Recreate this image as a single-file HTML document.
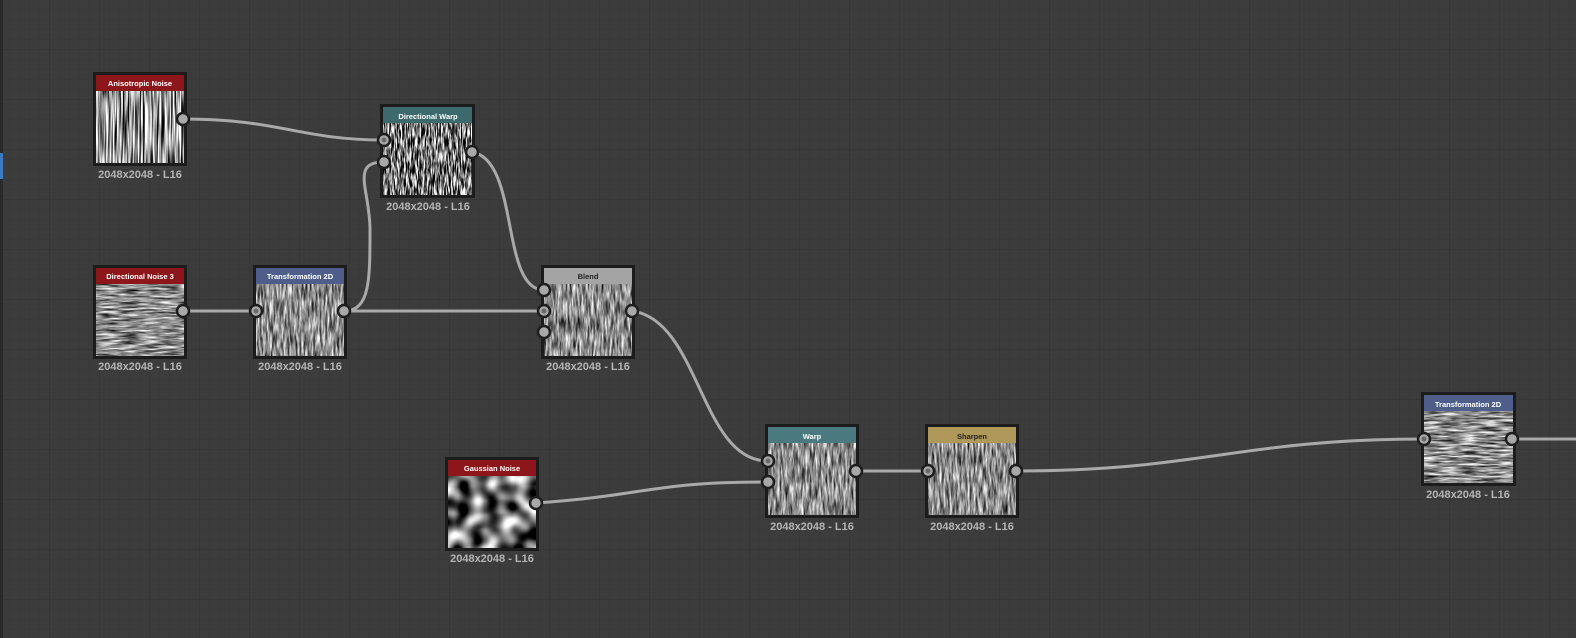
<!DOCTYPE html>
<html><head><meta charset="utf-8"><style>
html,body{margin:0;padding:0;background:#3c3c3c;overflow:hidden}
svg{display:block}
text{font-family:"Liberation Sans",sans-serif}
.h{font-size:7.5px;font-weight:bold;fill:#fff;text-anchor:middle}
.l{font-size:11px;font-weight:bold;fill:#b4b4b4;text-anchor:middle}
.w{fill:none;stroke:#a9a9a9;stroke-width:3}
.p{fill:#a8a8a8;stroke:#1e1e1e;stroke-width:2.5}
.d{fill:#6a6a6a}
filter{color-interpolation-filters:sRGB}
</style></head><body>
<svg width="1576" height="638" viewBox="0 0 1576 638" xmlns="http://www.w3.org/2000/svg">
<defs>
<pattern id="g1" width="10" height="10" patternUnits="userSpaceOnUse"><path d="M10 0V10H0" fill="none" stroke="#373737" stroke-width="1"/></pattern>
<pattern id="g2" width="50" height="50" patternUnits="userSpaceOnUse"><path d="M50 0V50H0" fill="none" stroke="#323232" stroke-width="1"/></pattern>
<filter id="fv" x="0" y="0" width="1" height="1" color-interpolation-filters="sRGB"><feTurbulence type="fractalNoise" baseFrequency="0.6 0.02" numOctaves="2" seed="3"/><feColorMatrix values="3 0 0 0 -0.9  3 0 0 0 -0.9  3 0 0 0 -0.9  0 0 0 0 1"/></filter>
<filter id="fw" x="0" y="0" width="1" height="1" color-interpolation-filters="sRGB"><feTurbulence type="fractalNoise" baseFrequency="0.7 0.08" numOctaves="3" seed="5"/><feColorMatrix values="3.2 0 0 0 -1.15  3.2 0 0 0 -1.15  3.2 0 0 0 -1.15  0 0 0 0 1"/></filter>
<filter id="fg" x="0" y="0" width="1" height="1" color-interpolation-filters="sRGB"><feTurbulence type="fractalNoise" baseFrequency="0.5 0.06" numOctaves="3" seed="7"/><feColorMatrix values="1.5 0 0 0 -0.2  1.5 0 0 0 -0.2  1.5 0 0 0 -0.2  0 0 0 0 1"/></filter>
<filter id="fh" x="0" y="0" width="1" height="1" color-interpolation-filters="sRGB"><feTurbulence type="fractalNoise" baseFrequency="0.05 0.5" numOctaves="3" seed="9"/><feColorMatrix values="1.5 0 0 0 -0.2  1.5 0 0 0 -0.2  1.5 0 0 0 -0.2  0 0 0 0 1"/></filter>
<filter id="fb" x="0" y="0" width="1" height="1" color-interpolation-filters="sRGB"><feTurbulence type="fractalNoise" baseFrequency="0.07" numOctaves="1" seed="2"/><feColorMatrix values="2.6 0 0 0 -0.85  2.6 0 0 0 -0.85  2.6 0 0 0 -0.85  0 0 0 0 1"/></filter>
</defs>
<rect width="1576" height="638" fill="#3c3c3c"/>
<rect width="1576" height="638" fill="url(#g1)"/>
<rect width="1576" height="638" fill="url(#g2)"/>
<rect x="0" y="0" width="3" height="638" fill="#2a2a2a"/>
<rect x="0" y="153" width="3" height="26" fill="#3a7ac0"/>

<path class="w" d="M183 119 C280 119 300 140 384 140"/>
<path class="w" d="M384 162 C350 162 370 190 370 230 C370 280 370 311 344 311"/>
<path class="w" d="M472 152 C520 160 500 290 544 290"/>
<path class="w" d="M183 311 H256"/>
<path class="w" d="M344 311 H544"/>
<path class="w" d="M632 311 C700 320 700 461 768 461"/>
<path class="w" d="M536 503 C650 495 650 482 768 482"/>
<path class="w" d="M856 471 H928"/>
<path class="w" d="M1016 471 C1200 471 1240 439 1424 439"/>
<path class="w" d="M1512 439 H1576"/>

<g>
<rect x="93" y="72" width="94" height="94" fill="#1c1c1c"/>
<rect x="96" y="90" width="88" height="73" filter="url(#fv)"/>
<rect x="96" y="75" width="88" height="16" fill="#8c161a"/>
<text class="h" x="140" y="86">Anisotropic Noise</text>
<text class="l" x="140" y="178">2048x2048 - L16</text>
</g>
<g>
<rect x="380" y="104" width="95" height="94" fill="#1c1c1c"/>
<rect x="383" y="122" width="89" height="73" filter="url(#fw)"/>
<rect x="383" y="107" width="89" height="16" fill="#3c6a6c"/>
<text class="h" x="428" y="119">Directional Warp</text>
<text class="l" x="428" y="210">2048x2048 - L16</text>
</g>
<g>
<rect x="93" y="265" width="94" height="94" fill="#1c1c1c"/>
<rect x="96" y="283" width="88" height="73" filter="url(#fh)"/>
<rect x="96" y="268" width="88" height="16" fill="#8c161a"/>
<text class="h" x="140" y="279">Directional Noise 3</text>
<text class="l" x="140" y="370">2048x2048 - L16</text>
</g>
<g>
<rect x="253" y="265" width="94" height="94" fill="#1c1c1c"/>
<rect x="256" y="283" width="88" height="73" filter="url(#fg)"/>
<rect x="256" y="268" width="88" height="16" fill="#4f5d8a"/>
<text class="h" x="300" y="279">Transformation 2D</text>
<text class="l" x="300" y="370">2048x2048 - L16</text>
</g>
<g>
<rect x="541" y="265" width="94" height="94" fill="#1c1c1c"/>
<rect x="544" y="283" width="88" height="73" filter="url(#fg)"/>
<rect x="544" y="268" width="88" height="16" fill="#a4a4a4"/>
<text class="h" x="588" y="279" style="fill:#222">Blend</text>
<text class="l" x="588" y="370">2048x2048 - L16</text>
</g>
<g>
<rect x="445" y="457" width="94" height="94" fill="#1c1c1c"/>
<rect x="448" y="475" width="88" height="73" filter="url(#fb)"/>
<rect x="448" y="460" width="88" height="16" fill="#8c161a"/>
<text class="h" x="492" y="471">Gaussian Noise</text>
<text class="l" x="492" y="562">2048x2048 - L16</text>
</g>
<g>
<rect x="765" y="424" width="94" height="94" fill="#1c1c1c"/>
<rect x="768" y="442" width="88" height="73" filter="url(#fg)"/>
<rect x="768" y="427" width="88" height="16" fill="#4a7a80"/>
<text class="h" x="812" y="439">Warp</text>
<text class="l" x="812" y="530">2048x2048 - L16</text>
</g>
<g>
<rect x="925" y="424" width="94" height="94" fill="#1c1c1c"/>
<rect x="928" y="442" width="88" height="73" filter="url(#fg)"/>
<rect x="928" y="427" width="88" height="16" fill="#b0985a"/>
<text class="h" x="972" y="439" style="fill:#222">Sharpen</text>
<text class="l" x="972" y="530">2048x2048 - L16</text>
</g>
<g>
<rect x="1421" y="392" width="95" height="94" fill="#1c1c1c"/>
<rect x="1424" y="410" width="89" height="73" filter="url(#fh)"/>
<rect x="1424" y="395" width="89" height="16" fill="#4f5d8a"/>
<text class="h" x="1468" y="407">Transformation 2D</text>
<text class="l" x="1468" y="498">2048x2048 - L16</text>
</g>

<circle class="p" cx="183" cy="119" r="6"/>
<circle class="p" cx="384" cy="140" r="6"/><circle class="d" cx="384" cy="140" r="2.5"/>
<circle class="p" cx="384" cy="162" r="6"/>
<circle class="p" cx="472" cy="152" r="6"/>
<circle class="p" cx="183" cy="311" r="6"/>
<circle class="p" cx="256" cy="311" r="6"/><circle class="d" cx="256" cy="311" r="2.5"/>
<circle class="p" cx="344" cy="311" r="6"/>
<circle class="p" cx="544" cy="290" r="6"/>
<circle class="p" cx="544" cy="311" r="6"/><circle class="d" cx="544" cy="311" r="2.5"/>
<circle class="p" cx="544" cy="332" r="6"/>
<circle class="p" cx="632" cy="311" r="6"/>
<circle class="p" cx="536" cy="503" r="6"/>
<circle class="p" cx="768" cy="461" r="6"/><circle class="d" cx="768" cy="461" r="2.5"/>
<circle class="p" cx="768" cy="482" r="6"/>
<circle class="p" cx="856" cy="471" r="6"/>
<circle class="p" cx="928" cy="471" r="6"/><circle class="d" cx="928" cy="471" r="2.5"/>
<circle class="p" cx="1016" cy="471" r="6"/>
<circle class="p" cx="1424" cy="439" r="6"/><circle class="d" cx="1424" cy="439" r="2.5"/>
<circle class="p" cx="1512" cy="439" r="6"/>
</svg>
</body></html>
